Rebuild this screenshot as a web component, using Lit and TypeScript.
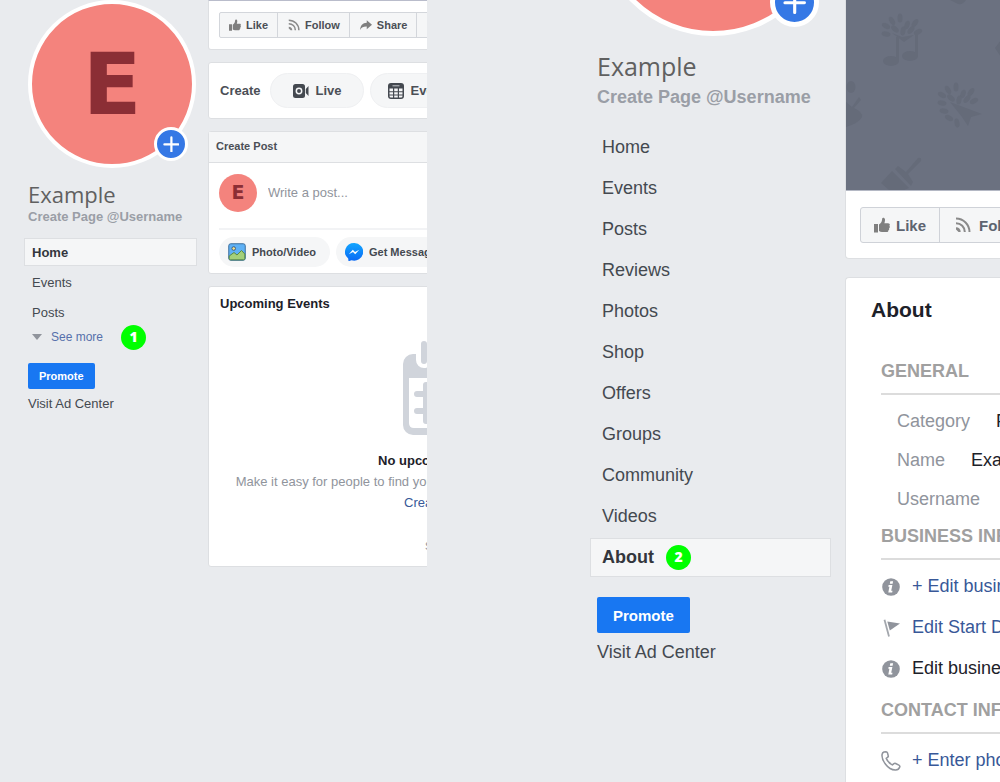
import { LitElement, html, css, svg, nothing } from "lit";
import { customElement, property } from "lit/decorators.js";
import { classMap } from "lit/directives/class-map.js";

const thumb = html`<svg class="ico" viewBox="0 0 16 16" aria-hidden="true">
  <path fill="#7f7f7f" d="M0 7h4v8.500H0zM5 7.500C7.500 6 8 4 8.200 1.500 8.300.300 10.800.300 11 2.500c.1 1.300-.2 2.500-.6 3.700H14c2 0 2.300 1.800 1.300 2.600.9.800.7 2-.3 2.400.6.900.2 1.900-.7 2.200.2 1-.5 1.600-1.500 1.600H8c-1.200 0-2-.4-3-1z"/>
</svg>`;

const rss = html`<svg class="ico" viewBox="0 0 16 16" aria-hidden="true">
  <g fill="none" stroke="#8a8a8a" stroke-width="2">
    <path d="M1 1.500C8.500 1.500 14.500 7.500 14.500 15"/>
    <path d="M1 6.300C6 6.300 9.800 10 9.800 15"/>
  </g>
  <path fill="#8a8a8a" d="M1 10.300c2.700 0 4.700 2 4.700 4.700H3.500L1 12.500z"/>
</svg>`;

const share = html`<svg class="ico" viewBox="0 0 16 16" aria-hidden="true">
  <path fill="#7f7f7f" d="M9 1.500 16 7.500 9 13.500V10C5 9.800 2 11 .3 14.500.3 8.500 3.500 5.200 9 5z"/>
</svg>`;

const live = html`<svg class="glyph" viewBox="0 0 16 14" aria-hidden="true">
  <rect x="0" y="0" width="12" height="14" rx="2.500" fill="#444950"/>
  <circle cx="6" cy="7" r="2.700" fill="#444950" stroke="#f5f6f7" stroke-width="1.500"/>
  <path d="M12.800 5 15.500 2v10l-2.700-3z" fill="#444950"/>
</svg>`;

const table = html`<svg class="glyph" viewBox="0 0 16 16" aria-hidden="true">
  <rect x="0" y="0" width="16" height="16" rx="3" fill="#444950"/>
  <path d="M4.500 2.800h7" stroke="#c5c8cc" stroke-width="1"/>
  <g fill="#f5f6f7">
    <path d="M1.500 5.500h3.500v2.700H1.500zM6.200 5.500h3.600v2.700H6.200zM11 5.500h3.500v2.700H11z"/>
    <path d="M1.500 9.200h3.500v2.300H1.500zM6.200 9.200h3.600v2.300H6.200zM11 9.200h3.500v2.300H11z"/>
    <path d="M1.500 12.500h3.500v2H3a1.500 1.500 0 0 1-1.500-1.500zM6.200 12.500h3.600v2H6.200zM11 12.500h3.500v.5a1.500 1.500 0 0 1-1.500 1.500h-2z"/>
  </g>
</svg>`;

const photo = html`<svg class="pic" viewBox="0 0 18 18" aria-hidden="true">
  <rect x=".75" y=".75" width="16.500" height="16.500" rx="2" fill="#5fb1f5" stroke="#3c6f9c" stroke-width="1"/>
  <path d="M1.200 13 6 9.500l3 2.500 4.500-4.500 3.300 3.500v4.500a1.300 1.300 0 0 1-1.300 1.300h-13a1.300 1.300 0 0 1-1.300-1.300z" fill="#a4d07a" stroke="#5b8a44" stroke-width="1"/>
  <circle cx="5.700" cy="5.500" r="1.800" fill="#f7e08a" stroke="#3d5f80" stroke-width="1"/>
</svg>`;

const messenger = html`<svg class="pic" viewBox="0 0 18 18" aria-hidden="true">
  <defs><linearGradient id="m" x1="0" y1="0" x2="0" y2="1">
    <stop offset="0" stop-color="#12a6ff"/><stop offset="1" stop-color="#0a68f5"/>
  </linearGradient></defs>
  <path d="M9 0a9 8.800 0 1 1-2.500 17.200L3.500 18.300 3.200 15.500A9 8.800 0 0 1 9 0z" fill="url(#m)"/>
  <path d="M3.800 11.200 7.800 6.800l2.200 2.100 4.300-2.100-4.100 4.400-2.200-2.100z" fill="#fff"/>
</svg>`;

const calendar = html`<svg class="calendar" viewBox="0 0 78 94" aria-hidden="true">
  <path fill="#d0d4db" fill-rule="evenodd" d="M10 13h3v6a8 8 0 0 0 16 0v-6h20v6a8 8 0 0 0 16 0v-6h3a10 10 0 0 1 10 10v61a10 10 0 0 1-10 10H10A10 10 0 0 1 0 84V23a10 10 0 0 1 10-10zM6 37v45q0 5 5 5h56q5 0 5-5V37z"/>
  <g fill="none" stroke="#d0d4db" stroke-width="6" stroke-linecap="round">
    <path d="M21 3v17M57 3v17"/>
    <path d="M14 53h50M14 70h50M23 44v36M39 44v36M55 44v36"/>
  </g>
</svg>`;

const info = html`<svg class="row-ico" viewBox="0 0 18 18" aria-hidden="true">
  <circle cx="9" cy="9" r="8.800" fill="#90949c"/>
  <path fill="#fff" d="M8.300 3.300h2.800l-.5 2.400H7.800zM6.600 7h3.800l-1.200 5.800h1.300l-.3 1.700H6.300L7.400 8.700H6.300z"/>
</svg>`;

const flag = html`<svg class="row-ico" viewBox="0 0 18 18" aria-hidden="true">
  <path d="M2.500.800 7 17.500" stroke="#a3a7ad" stroke-width="1.800"/>
  <path fill="#90949c" d="M5.300 2.500 18 4.500 7.800 11.500z"/>
</svg>`;

const phone = html`<svg class="row-ico wide" viewBox="0 0 22 22" aria-hidden="true">
  <path fill="none" stroke="#90949c" stroke-width="1.700" stroke-linejoin="round" d="M3.200 1.200 5.500.800q1.200 0 1.700 1.500L8 5.200q.3 1-.8 1.700L5.700 8q1.500 4.500 6.800 7.300l1.800-1.500q.8-.6 1.800-.1l3.600 1.800q1.400.8.900 2.200-1.200 3.500-4.800 3.300Q9.500 20.500 5 14.500.500 8.500 1.200 3.800 1.500 1.800 3.200 1.200z"/>
</svg>`;

const leaf = (x: number, y: number, r: number) =>
  svg`<ellipse cx=${x} cy=${y} rx="2.500" ry="4.500" transform=${`rotate(${r} ${x} ${y})`}/>`;

const crown = svg`${[
  [4, 9, -60], [10, 4, -30], [18, 1, 0], [25, 8, 20], [33, 6, 35], [4, 17, -80],
  [13, 12, -50], [21, 14, 10], [36, 15, 60], [29, 13, 40],
].map(([x, y, r]) => leaf(x, y, r))}`;

const coverPattern = html`<svg class="pattern" viewBox="0 0 155 190" aria-hidden="true">
  <g fill="#656b79">
    <g transform="translate(36 17)">${crown}
      <path d="M10 16 20 20 32 18 22 25z"/>
      <ellipse cx="9" cy="44" rx="8" ry="5"/><ellipse cx="28" cy="39" rx="8" ry="5"/>
      <path d="M14 20h3v24h-3zM33 16h3v24h-3z"/>
    </g>
    <g transform="translate(92 86)">${crown}
      <path d="M12 16 28 22 44 28 33 31 30 40 24 31z"/>
      ${leaf(6, 25, -80)}${leaf(11, 32, -60)}${leaf(19, 37, -10)}
    </g>
    <path d="M0 102 6 107 13 97 15 100 8 108Q17 112 16 117 13 123 0 127z"/>
    <ellipse cx="5" cy="87" rx="4.500" ry="6"/>
    <path d="M35 183 46 171 63 188 58 190H43zM49 169 52 166 60 172 72 158q4-1 3 3L62 174 67 182 65 186z"/>
    <path d="M104 0h16q-3 5-8 4zM155 40 149 48 155 57z"/>
  </g>
</svg>`;

const tokens = css`
  :host { display: block; box-sizing: border-box; font-family: "Liberation Sans", Arial, sans-serif; color: #444950; }
  * { box-sizing: border-box; }
  a { color: inherit; text-decoration: none; }
  button { font: inherit; color: inherit; margin: 0; cursor: pointer; }
  svg { display: block; flex: none; }
  h2, h3, p, ul, dl, dd { margin: 0; padding: 0; }
`;

@customElement("page-sidebar")
class PageSidebar extends LitElement {
  @property({ attribute: false }) items: string[] = [];
  @property() current = "";
  @property() step = "";
  @property({ type: Boolean }) more = false;

  static styles = [tokens, css`
    :host {
      --avatar: 168px; --ring: 4px; --letter: 86px; --plus: 34px; --plus-ring: 3px;
      --plus-right: 8px; --plus-bottom: 7px;
      --name: 22px; --name-line: 30px; --name-gap: 11px;
      --text: 13px; --sub-line: 16px; --sub-gap: 13px;
      --item: 28px; --item-gap: 2px; --inset: 4px; --pad: 7px;
      --cta-text: 11px; --cta-h: 26px; --cta-pad: 11px; --cta-gap: 0px; --visit: 30px;
    }
    :host([large]) {
      --avatar: 232px; --ring: 5px; --letter: 118px; --plus: 49px; --plus-ring: 5px;
      --plus-right: 10px; --plus-bottom: 9px;
      --name: 25px; --name-line: 36px; --name-gap: 12px;
      --text: 18px; --sub-line: 26px; --sub-gap: 18px;
      --item: 39px; --item-gap: 2px; --inset: 7px; --pad: 11px;
      --cta-text: 15px; --cta-h: 36px; --cta-pad: 16px; --cta-gap: 20px; --visit: 38px;
    }
    .avatar {
      position: relative; width: var(--avatar); height: var(--avatar); border-radius: 50%;
      border: var(--ring) solid #fff; background: #f4837d; color: #8b2e35;
      display: grid; place-items: center;
      font: 700 var(--letter) / 1 "DejaVu Sans", Verdana, sans-serif;
    }
    .plus {
      position: absolute; right: var(--plus-right); bottom: var(--plus-bottom);
      width: var(--plus); height: var(--plus);
      margin: 0 calc(0px - var(--ring)) calc(0px - var(--ring)) 0;
      padding: 0; border: var(--plus-ring) solid #fff; border-radius: 50%; background: #3578e5;
      display: grid; place-items: center;
    }
    .plus svg { width: 60%; height: 60%; }
    .name {
      margin-top: var(--name-gap); color: #606060;
      font: 400 var(--name) / var(--name-line) "Open Sans", "Noto Sans", sans-serif;
    }
    .handle { display: block; font-weight: 700; font-size: var(--text); line-height: var(--sub-line); color: #9a9ea6; white-space: nowrap; }
    nav { margin: var(--sub-gap) 0 0 calc(0px - var(--inset)); }
    ul { list-style: none; display: grid; gap: var(--item-gap); }
    .item {
      display: flex; align-items: center; gap: 12px; height: var(--item);
      padding: 0 var(--pad); border: 1px solid transparent; font-size: var(--text);
    }
    .item.on { background: #f5f6f7; border-color: #dddfe2; font-weight: 700; color: #33363d; }
    .more {
      display: flex; align-items: center; height: 22px; padding: 0 8px; border: 0;
      background: none; font-size: 12px; color: #5670ab;
    }
    .more .caret { border: 5px solid transparent; border-top: 6px solid #90949c; border-bottom: 0; margin-right: 9px; }
    .more .step { margin-left: 18px; }
    .step {
      width: 25px; height: 25px; border-radius: 50%; background: #0f0; color: #fff;
      display: grid; place-items: center; font: 800 14px/24px "Open Sans", "Noto Sans", sans-serif;
      align-content: start;
    }
    .cta {
      display: block; height: var(--cta-h); padding: 0 var(--cta-pad); margin-top: var(--cta-gap);
      border: 0; border-radius: 2px; background: #1877f2; color: #fff; font-weight: 700; font-size: var(--cta-text);
    }
    .visit { display: block; font-size: var(--text); line-height: var(--visit); }
    .tail { margin-top: 15px; }
  `];

  render() {
    const badge = html`<span class="step">${this.step}</span>`;
    return html`
      <div class="avatar">E
        <button class="plus" aria-label="Add">
          <svg viewBox="0 0 18 18"><path d="M9 1.500v15M1.500 9h15" stroke="#fff" stroke-width="2.400" stroke-linecap="round"/></svg>
        </button>
      </div>
      <h2 class="name">Example</h2>
      <a class="handle" href="#">Create Page @Username</a>
      <nav>
        <ul>
          ${this.items.map((item) => html`<li>
            <a href="#" class=${classMap({ item: true, on: item === this.current })}>${item}${
              item === this.current && !this.more ? badge : nothing}</a>
          </li>`)}
        </ul>
        ${this.more ? html`<button class="more"><span class="caret"></span>See more${badge}</button>` : nothing}
      </nav>
      <button class=${classMap({ cta: true, tail: this.more })}>Promote</button>
      <a class="visit" href="#">Visit Ad Center</a>
    `;
  }
}

@customElement("page-feed")
class PageFeed extends LitElement {
  static styles = [tokens, css`
    :host { overflow: hidden; }
    .column { width: 468px; display: flex; flex-direction: column; gap: 12px; }
    .card { background: #fff; border: 1px solid #dddfe2; border-radius: 3px; }
    .bar { height: 50px; padding: 11px 10px; border-top-color: #b9bccb; border-radius: 0 0 3px 3px; }
    .group { display: inline-flex; border: 1px solid #d3d6db; border-radius: 2px; background: #f5f6f7; }
    .group button {
      display: flex; align-items: center; gap: 5px; height: 24px; padding: 0 9px; border: 0;
      border-right: 1px solid #d3d6db; background: none; font-weight: 700; font-size: 11px; color: #4b4f56;
    }
    .group button + button { padding: 0 9px 0 10px; }
    .group button:last-child { border-right: 0; }
    .ico { width: 12px; height: 12px; }
    .create { height: 57px; padding: 0 11px; display: flex; align-items: center; gap: 6px; font-weight: 700; font-size: 13px; color: #4b4f56; }
    .create .label { margin-right: 4px; }
    .chip {
      display: flex; align-items: center; gap: 6px; height: 35px; padding: 0 22px; border: 1px solid #eff0f2;
      border-radius: 18px; background: #f5f6f7; white-space: nowrap;
    }
    .create .chip + .chip { padding: 0 17px; }
    .glyph { width: 16px; height: 16px; }
    .head { height: 31px; padding: 0 7px; border-bottom: 1px solid #dddfe2; background: #f5f6f7; font-size: 11px; line-height: 29px; color: #4b4f56; }
    .write { display: flex; align-items: center; gap: 11px; height: 67px; margin: 0 10px; padding-bottom: 6px; border-bottom: 2px solid #f2f3f5; }
    .face { width: 38px; height: 38px; border-radius: 50%; background: #f4837d; color: #8b2e35; display: grid; place-items: center; font: 700 19px/1 "DejaVu Sans", Verdana, sans-serif; }
    input { flex: 1; border: 0; padding: 0; outline: 0; font: inherit; font-size: 13px; }
    input::placeholder { color: #90949c; opacity: 1; }
    .tools { display: flex; gap: 6px; padding: 7px 10px 6px; }
    .tools .chip { height: 30px; padding: 0 14px 0 9px; border: 0; border-radius: 15px; font-weight: 700; font-size: 11px; }
    .pic { width: 18px; height: 18px; }
    .events { height: 281px; padding: 8px 11px; display: flex; flex-direction: column; font-size: 13px; }
    .title { font-size: 13px; line-height: 18px; color: #1d2129; }
    .empty { margin-top: 27px; display: flex; flex-direction: column; align-items: center; line-height: 21px; white-space: nowrap; }
    .calendar { width: 78px; height: 94px; margin: 1px 0 15px; }
    .strong { font-weight: 700; color: #1d2129; }
    .soft { color: #90949c; }
    .link { color: #385898; }
    .all { margin-top: 23px; font-size: 11px; color: #90949c; }
  `];

  render() {
    return html`<div class="column">
      <section class="card bar">
        <div class="group">
          <button>${thumb}Like</button><button>${rss}Follow</button><button>${share}Share</button><button>•••</button>
        </div>
      </section>
      <section class="card create">
        <span class="label">Create</span>
        <button class="chip">${live}Live</button>
        <button class="chip">${table}Event</button>
      </section>
      <section class="card">
        <h3 class="head">Create Post</h3>
        <div class="write">
          <span class="face">E</span>
          <input aria-label="Write a post" placeholder="Write a post..." />
        </div>
        <div class="tools">
          <button class="chip">${photo}Photo/Video</button>
          <button class="chip">${messenger}Get Messages</button>
        </div>
      </section>
      <section class="card events">
        <h3 class="title">Upcoming Events</h3>
        <div class="empty">
          ${calendar}
          <p class="strong">No upcoming events</p>
          <p class="soft">Make it easy for people to find your upcoming events in one easy place.</p>
          <a class="link" href="#">Create Event</a>
          <a class="all" href="#">See All</a>
        </div>
      </section>
    </div>`;
  }
}

@customElement("page-about")
class PageAbout extends LitElement {
  static styles = [tokens, css`
    :host { overflow: hidden; display: flex; flex-direction: column; gap: 18px; }
    .card { background: #fff; border: 1px solid #dddfe2; border-right: 0; border-radius: 4px 0 0 4px; }
    .top { border-top: 0; border-radius: 0 0 0 4px; }
    .cover { height: 191px; background: #6b7180; border-bottom: 1px solid #b4b8c4; overflow: hidden; }
    .pattern { width: 155px; height: 190px; }
    .actions { padding: 16px 0 15px 14px; }
    .group { display: flex; width: 400px; border: 1px solid #cfd2d8; border-radius: 3px; background: #f5f6f7; }
    .group button {
      display: flex; align-items: center; gap: 6px; height: 34px; padding: 0 13px; border: 0;
      border-right: 1px solid #cfd2d8; background: none; font-weight: 700; font-size: 15px; color: #5d6470;
    }
    .group button + button { padding-left: 15px; gap: 8px; }
    .ico { width: 16px; height: 16px; }
    .about { flex: 1; padding: 19px 0 0 25px; font-size: 18px; white-space: nowrap; }
    .title { font-size: 21px; line-height: 26px; color: #1d2129; }
    .block { padding-left: 10px; }
    .block h3 { font-size: 18px; line-height: 22px; padding-bottom: 11px; border-bottom: 2px solid #dcdcdc; color: #a0a0a0; }
    .block.first { margin-top: 37px; }
    .facts { padding: 7px 0 6px 16px; line-height: 39px; }
    .facts div { display: flex; gap: 26px; }
    dt { color: #90949c; }
    dd { color: #1d2129; }
    .rows { padding: 6px 0 10px; list-style: none; }
    .rows a { display: flex; align-items: center; gap: 11px; height: 41px; color: #385898; }
    .rows a.plain { color: #1d2129; }
    .row-ico { width: 18px; height: 18px; margin-left: 1px; margin-right: 1px; }
    .row-ico.wide { width: 20px; height: 22px; margin: 0; }
  `];

  render() {
    return html`
      <section class="card top">
        <div class="cover">${coverPattern}</div>
        <div class="actions"><div class="group">
          <button>${thumb}Like</button><button>${rss}Follow</button>
        </div></div>
      </section>
      <section class="card about">
        <h2 class="title">About</h2>
        <div class="block first">
          <h3>GENERAL</h3>
          <dl class="facts">
            <div><dt>Category</dt><dd>Page</dd></div>
            <div><dt>Name</dt><dd>Example</dd></div>
            <div><dt>Username</dt></div>
          </dl>
        </div>
        <div class="block">
          <h3>BUSINESS INFO</h3>
          <ul class="rows">
            <li><a href="#">${info}+ Edit business details</a></li>
            <li><a href="#">${flag}Edit Start Date</a></li>
            <li><a href="#" class="plain">${info}Edit business types</a></li>
          </ul>
        </div>
        <div class="block">
          <h3>CONTACT INFO</h3>
          <ul class="rows"><li><a href="#">${phone}+ Enter phone number</a></li></ul>
        </div>
      </section>`;
  }
}

@customElement("app-root")
class AppRoot extends LitElement {
  static styles = css`
    :host {
      display: grid; grid-template-columns: minmax(0, 427fr) minmax(0, 573fr);
      min-height: 100vh; max-height: 100vh; overflow: hidden; background: #e9ebee;
    }
    .pane { box-sizing: border-box; display: flex; min-width: 0; min-height: 0; overflow: hidden; }
    .side { flex: none; width: 197px; padding-left: 28px; margin-right: 11px; }
    .pane.zoomed { padding-left: 163px; }
    .side.big { width: 241px; padding-left: 7px; margin: -196px 14px 0 0; }
    page-feed, page-about { flex: 1; min-width: 0; }
  `;

  render() {
    return html`
      <div class="pane">
        <page-sidebar class="side" more step="1" current="Home" .items=${["Home", "Events", "Posts"]}></page-sidebar>
        <page-feed></page-feed>
      </div>
      <div class="pane zoomed">
        <page-sidebar class="side big" large step="2" current="About"
          .items=${["Home", "Events", "Posts", "Reviews", "Photos", "Shop", "Offers", "Groups", "Community", "Videos", "About"]}></page-sidebar>
        <page-about></page-about>
      </div>`;
  }
}
